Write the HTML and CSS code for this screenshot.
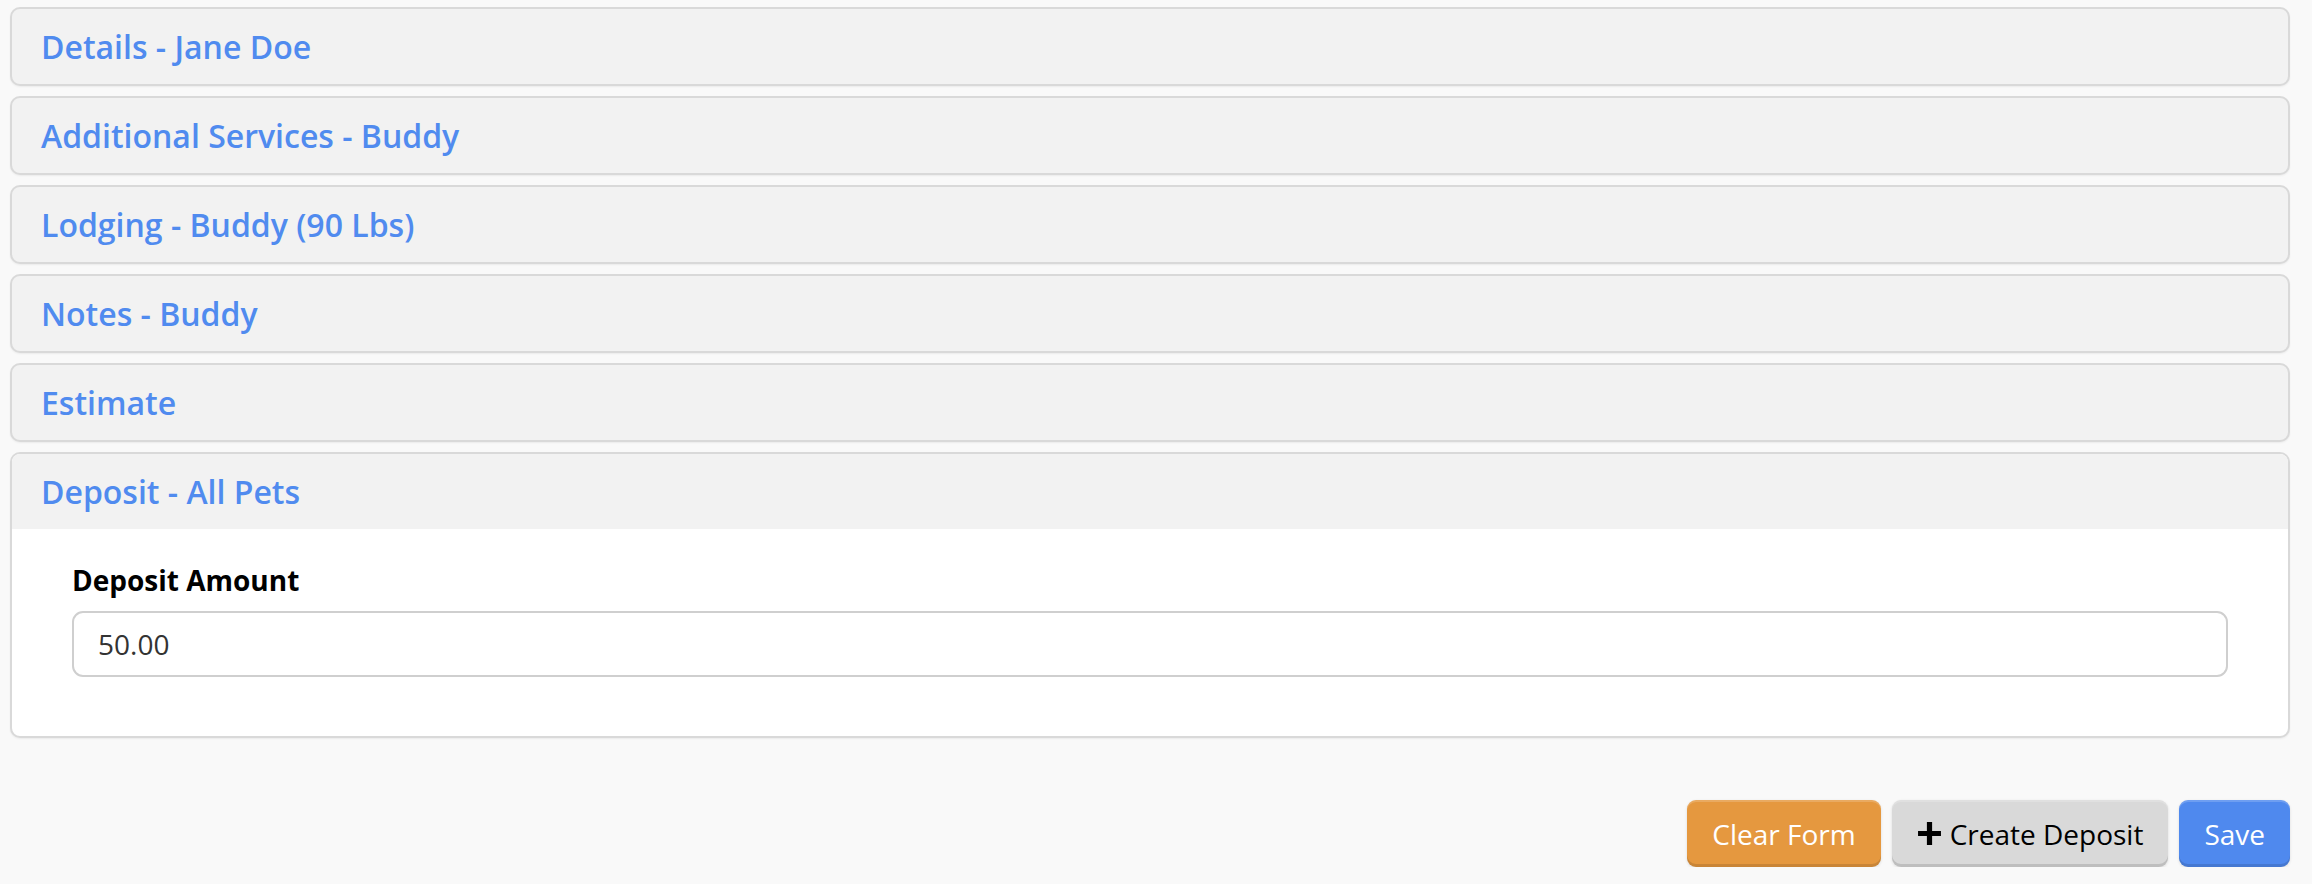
FILE: index.html
```html
<!DOCTYPE html>
<html lang="en">
<head>
    <meta charset="UTF-8">
    <meta name="viewport" content="width=device-width, initial-scale=1.0">
    <title>Booking - Buddy</title>
    <link rel="stylesheet" href="styles.css">
</head>
<body>
    <div class="page">
        <div class="panel">
            <div class="panel-heading">Details - Jane Doe</div>
        </div>
        <div class="panel">
            <div class="panel-heading">Additional Services - Buddy</div>
        </div>
        <div class="panel">
            <div class="panel-heading">Lodging - Buddy (90 Lbs)</div>
        </div>
        <div class="panel">
            <div class="panel-heading">Notes - Buddy</div>
        </div>
        <div class="panel">
            <div class="panel-heading">Estimate</div>
        </div>
        <div class="panel open">
            <div class="panel-heading">Deposit - All Pets</div>
            <div class="panel-body">
                <div class="form-group">
                    <label for="depositAmount">Deposit Amount</label>
                    <input type="text" id="depositAmount" value="50.00">
                </div>
            </div>
        </div>

        <div class="actions">
            <button type="button" class="btn btn-warning">Clear Form</button>
            <button type="button" class="btn btn-default">
                <svg class="icon-plus" viewBox="0 0 24 24" width="25" height="25" aria-hidden="true">
                    <path d="M9.5 1h5v8.5H23v5h-8.5V23h-5v-8.5H1v-5h8.5z" fill="#000"/>
                </svg>
                Create Deposit
            </button>
            <button type="button" class="btn btn-primary">Save</button>
        </div>
    </div>
</body>
</html>
```

FILE: styles.css
```css
body {
    margin: 0;
    background: #f9f9f9;
    font-family: 'Open Sans', 'Noto Sans', sans-serif;
    color: #000;
}
.page {
    padding: 7px 22px 0 10px;
}
.panel {
    background: #f2f2f2;
    border: 2px solid #d9d9d9;
    border-radius: 10px;
    margin-bottom: 10px;
    overflow: hidden;
    box-shadow: 0 1px 2px rgba(0,0,0,0.06);
}
.panel-heading {
    height: 75px;
    display: flex;
    align-items: center;
    padding: 0 29px;
    font-size: 32px;
    font-weight: 600;
    color: #508bef;
}
.open {
    background: #fff;
}
.open .panel-heading {
    background: #f2f2f2;
}
.panel-body {
    padding: 32px 60px 59px;
}
label {
    display: block;
    font-size: 28px;
    font-weight: 700;
    line-height: 38px;
    margin-bottom: 12px;
}
input {
    width: 100%;
    height: 66px;
    box-sizing: border-box;
    border: 2px solid #cfcfcf;
    border-radius: 11px;
    padding: 0 24px;
    font-family: inherit;
    font-size: 28px;
    color: #333;
    background: #fff;
}
.actions {
    display: flex;
    justify-content: flex-end;
    gap: 11px;
    margin-top: 62px;
}
.btn {
    height: 67px;
    padding: 0 25px;
    border: none;
    border-radius: 9px;
    font-family: inherit;
    font-size: 28px;
    display: flex;
    align-items: center;
    gap: 8px;
    cursor: pointer;
    box-shadow: inset 0 -3px 0 rgba(0,0,0,0.12), inset 0 2px 0 rgba(255,255,255,0.18), 0 1px 3px rgba(0,0,0,0.12);
}
.btn-warning {
    background: #e5983f;
    color: #fff;
}
.btn-default {
    background: #d9d9d9;
    color: #000;
}
.btn-primary {
    background: #4f89ee;
    color: #fff;
}
```
